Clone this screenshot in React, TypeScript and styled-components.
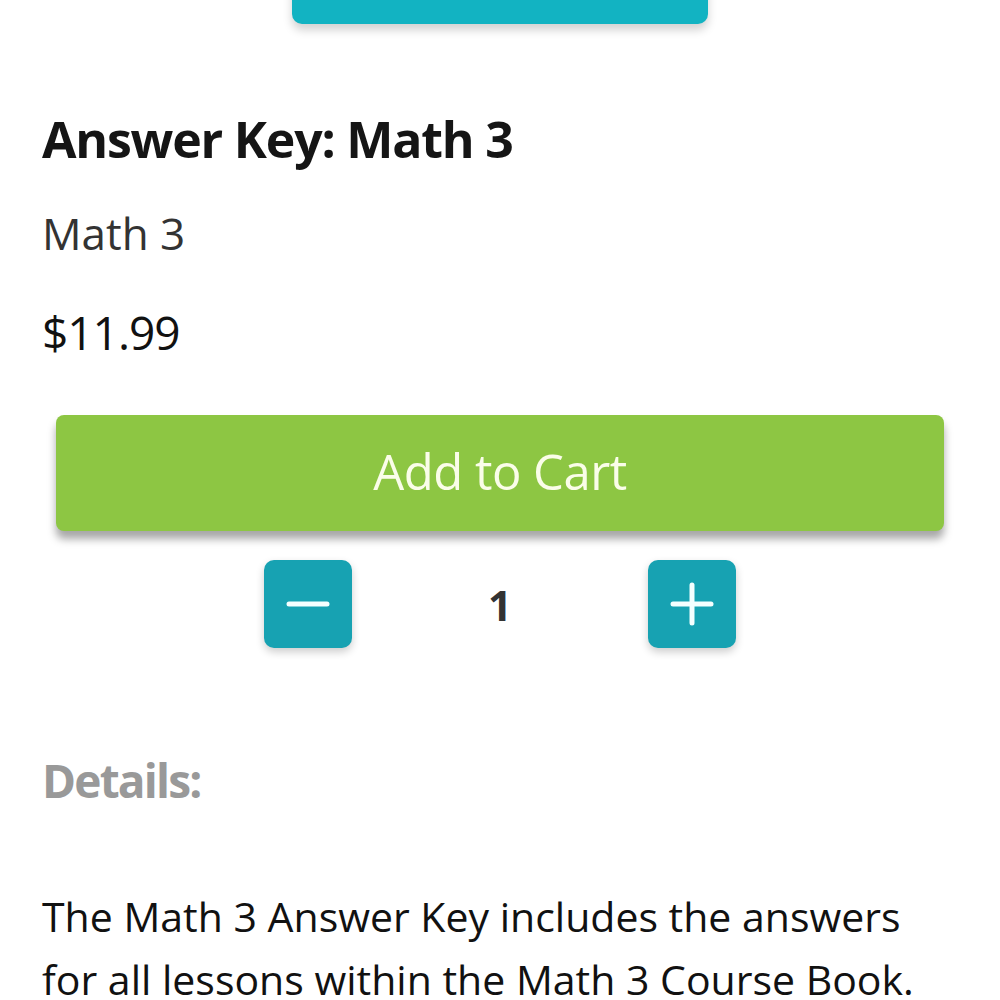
import styled, { createGlobalStyle } from "styled-components";
import { useState } from "react";

const GlobalStyle = createGlobalStyle`
  html, body {
    margin: 0;
    padding: 0;
    background: #ffffff;
  }
  body {
    font-family: "Open Sans", "Noto Sans", sans-serif;
    overflow: hidden;
  }
`

const App = () => {
    const [qty, setQty] = useState(1)

    return (
        <>
            <GlobalStyle />
            <Page>
                <TopButtonRow>
                    <TopButton aria-label="View sample" />
                </TopButtonRow>
                <Info>
                    <Title>Answer Key: Math 3</Title>
                    <Subtitle>Math 3</Subtitle>
                    <Price>$11.99</Price>
                </Info>
                <CartButton>Add to Cart</CartButton>
                <QtyRow>
                    <QtyButton onClick={() => setQty(Math.max(1, qty - 1))} aria-label="Decrease">
                        <svg width="50" height="50" viewBox="0 0 50 50">
                            <line x1="6" y1="25" x2="44" y2="25" stroke="#f4ffff" strokeWidth="5" strokeLinecap="round" />
                        </svg>
                    </QtyButton>
                    <Qty>{qty}</Qty>
                    <QtyButton onClick={() => setQty(qty + 1)} aria-label="Increase">
                        <svg width="50" height="50" viewBox="0 0 50 50">
                            <line x1="6" y1="25" x2="44" y2="25" stroke="#f4ffff" strokeWidth="5" strokeLinecap="round" />
                            <line x1="25" y1="6" x2="25" y2="44" stroke="#f4ffff" strokeWidth="5" strokeLinecap="round" />
                        </svg>
                    </QtyButton>
                </QtyRow>
                <Details>
                    <DetailsTitle>Details:</DetailsTitle>
                    <Description>
                        The Math 3 Answer Key includes the answers for all lessons within the Math 3 Course Book.
                    </Description>
                </Details>
            </Page>
        </>
    )
}

export default App

const Page = styled.div`
  width: 1000px;
  display: flex;
  flex-direction: column;
  align-items: stretch;
`

const TopButtonRow = styled.div`
  display: flex;
  justify-content: center;
  padding-bottom: 22px;
`

const TopButton = styled.button`
  width: 416px;
  height: 90px;
  margin-top: -66px;
  border: 0;
  border-radius: 10px;
  background: #12b3c2;
  box-shadow: 0 6px 10px rgba(0, 0, 0, 0.18);
`

const Info = styled.div`
  padding: 0 42px;
  display: flex;
  flex-direction: column;
`

const Title = styled.h1`
  margin: 0;
  padding-top: 63px;
  font-size: 50px;
  font-weight: 700;
  line-height: 60px;
  color: #151515;
  letter-spacing: -1.2px;
`

const Subtitle = styled.div`
  margin-top: 34px;
  font-size: 44px;
  line-height: 60px;
  color: #333333;
`

const Price = styled.div`
  margin-top: 39px;
  font-size: 46px;
  line-height: 60px;
  color: #111111;
  letter-spacing: -1px;
`

const CartButton = styled.button`
  margin: 53px 56px 0;
  height: 116px;
  border: 0;
  border-radius: 8px;
  background: #8dc643;
  color: #fafde9;
  font-family: "Open Sans", sans-serif;
  font-size: 49px;
  letter-spacing: -0.5px;
  padding: 0 0 4px;
  box-shadow: 0 8px 8px rgba(0, 0, 0, 0.35);
  cursor: pointer;
`

const QtyRow = styled.div`
  margin-top: 29px;
  display: grid;
  grid-template-columns: 88px 1fr 88px;
  width: 472px;
  align-self: center;
  align-items: center;
`

const QtyButton = styled.button`
  width: 88px;
  height: 88px;
  border: 0;
  border-radius: 10px;
  background: #17a2b2;
  display: flex;
  align-items: center;
  justify-content: center;
  padding: 0;
  box-shadow: 0 4px 8px rgba(0, 0, 0, 0.2);
  cursor: pointer;
`

const Qty = styled.div`
  text-align: center;
  font-size: 42px;
  font-weight: 700;
  color: #333333;
`

const Details = styled.div`
  padding: 0 78px 0 42px;
`

const DetailsTitle = styled.div`
  margin-top: 102px;
  font-size: 46px;
  font-weight: 700;
  line-height: 60px;
  color: #999999;
  letter-spacing: -1.8px;
`

const Description = styled.p`
  margin: 75px 0 0;
  font-size: 41px;
  line-height: 63px;
  color: #111111;
  letter-spacing: 0;
`
